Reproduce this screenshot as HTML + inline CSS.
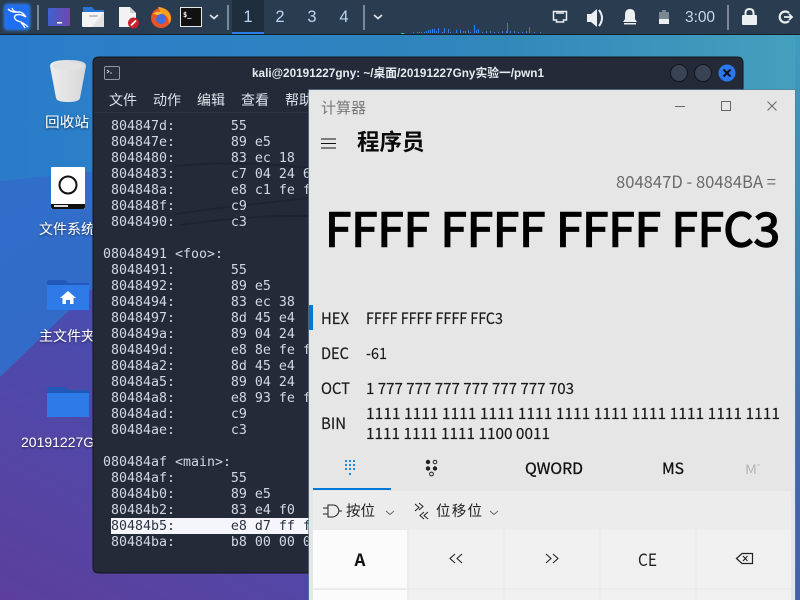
<!DOCTYPE html>
<html><head><meta charset="utf-8"><style>
html,body{margin:0;padding:0;width:800px;height:600px;overflow:hidden;background:#3a68c8}
svg{position:absolute;left:0;top:0}
text{font-family:"Liberation Sans","Noto Sans CJK SC",sans-serif}
.c text,text.c{font-family:"Noto Sans CJK SC","Liberation Sans",sans-serif}
.d{font-size:14px;fill:#fff;filter:url(#sh)}
pre{position:absolute;margin:0;font:13.29px/16px "DejaVu Sans Mono","Liberation Mono",monospace;color:#cfd8e3}
</style></head><body>
<svg width="800" height="600" viewBox="0 0 800 600">
<defs>
<linearGradient id="bg" x1="0" y1="0" x2="1" y2="0"><stop offset="0" stop-color="#2a7cca"/><stop offset=".6" stop-color="#2f87bb"/><stop offset="1" stop-color="#45a0bd"/></linearGradient>
<linearGradient id="bg2" x1="0" y1="0" x2="1" y2="1"><stop offset="0" stop-color="#2f6fcb"/><stop offset="1" stop-color="#3f5fc0"/></linearGradient>
<linearGradient id="bg3" x1="0" y1="1" x2="1" y2="0"><stop offset="0" stop-color="#5c3f9c"/><stop offset=".5" stop-color="#4650b4"/><stop offset="1" stop-color="#3f62b4"/></linearGradient>
<linearGradient id="rs" x1="0" y1="0" x2="0" y2="1"><stop offset="0" stop-color="#3f9cbc"/><stop offset=".4" stop-color="#3f84b4"/><stop offset=".7" stop-color="#4468ae"/><stop offset="1" stop-color="#4260ac"/></linearGradient>
<linearGradient id="tm" x1="0" y1="0" x2="1" y2="0"><stop offset="0" stop-color="#3f62d0"/><stop offset="1" stop-color="#6f48ac"/></linearGradient>
<filter id="sh" x="-20%" y="-30%" width="140%" height="170%"><feDropShadow dx="0" dy="1" stdDeviation="1.2" flood-color="#000" flood-opacity=".6"/></filter>
<filter id="gl" x="-30%" y="-30%" width="160%" height="160%"><feGaussianBlur stdDeviation="1.6"/></filter>
<linearGradient id="bin" x1="0" y1="0" x2="1" y2="0"><stop offset="0" stop-color="#ececec"/><stop offset="1" stop-color="#d8d8d8"/></linearGradient>
</defs>
<rect width="800" height="600" fill="url(#bg)"/>
<polygon points="0,181 300,150 800,120 800,600 0,600" fill="url(#bg2)"/>
<polygon points="0,377 90,290 400,180 800,260 800,600 0,600" fill="url(#bg3)"/>
<rect x="795" y="35" width="5" height="565" fill="url(#rs)"/>

<!-- desktop icons -->
<path d="M50 66 Q50 60 68 60 Q86 60 86 66 L80 98 Q79 102 68 102 Q57 102 56 98Z" fill="url(#bin)"/>
<ellipse cx="68" cy="66" rx="15.500" ry="4" fill="#e2e2e2"/>
<text class="d" x="45" y="127" textLength="44" lengthAdjust="spacingAndGlyphs">回收站</text>
<rect x="51" y="167" width="34" height="42" rx="1" fill="#fff"/>
<path d="M51 204h34v3q0 2-2 2H53q-2 0-2-2z" fill="#111"/>
<rect x="54" y="205" width="14" height="2" fill="#ddd"/>
<circle cx="68" cy="185" r="8.500" fill="none" stroke="#111" stroke-width="2"/>
<text class="d" x="39" y="234">文件系统</text>
<path d="M47 282q0-2 2-2h16l3 3h21v4H47z" fill="#2259b8"/>
<rect x="47" y="285" width="42" height="25" fill="#2e7ae6"/>
<path d="M68 291l8 7h-2.500v6h-3.500v-4h-4v4h-3.500v-6h-2.500z" fill="#fff"/>
<text class="d" x="39" y="341">主文件夹</text>
<path d="M47 389q0-2 2-2h16l3 3h21v4H47z" fill="#2259b8"/>
<rect x="47" y="393" width="42" height="24" fill="#2e7ae6"/>
<text class="d" x="21" y="447">20191227G…</text>

<!-- panel -->
<rect width="800" height="34" fill="#2a3c4f"/>
<rect y="34" width="800" height="1" fill="#16202a"/>
<rect x="232" width="32" height="34" fill="#1f2e3d"/>
<rect x="232" y="32" width="32" height="2" fill="#2a7ee6"/>
<rect x="4" y="4" width="26" height="26" rx="3" fill="#2a86ff" filter="url(#gl)"/>
<rect x="5" y="5" width="24" height="24" rx="2" fill="#1f6ff0"/>
<path d="M8 9C12 13 16 12 19 12C22 12 24 14 26 17C23 15 19 14 16 15C13 17 15 20 18 21C22 22 25 24 28 27M12 8C13 11 15 12 17 12M21 23C23 24 24 26 25 28" fill="none" stroke="#fff" stroke-width="1.400"/>
<rect x="37" y="5" width="2" height="25" fill="#7a8896"/>
<rect x="227" y="5" width="2" height="25" fill="#7a8896"/>
<rect x="363" y="5" width="2" height="25" fill="#7a8896"/>
<rect x="727" y="5" width="2" height="25" fill="#7a8896"/>
<rect x="48" y="8" width="22" height="18" rx="1" fill="url(#tm)"/>
<rect x="57" y="22" width="5" height="1.500" fill="#fff"/>
<path d="M83 7h9l3 3h9v4H83z" fill="#2a73d6"/>
<path d="M82 12h22v14q0 1-1 1H83q-1 0-1-1z" fill="#f4f4f4"/>
<path d="M104 12v15H92z" fill="#e2e2e2"/>
<rect x="89" y="15" width="9" height="2" rx="1" fill="#c2c2c2"/>
<path d="M119 7h11l6 6v14h-17z" fill="#f2f2f2"/>
<path d="M130 7l6 6h-6z" fill="#cfcfcf"/>
<circle cx="133.500" cy="23" r="5.500" fill="#c8202c"/>
<path d="M131 25.500l5-5" stroke="#fff" stroke-width="1.800"/>
<circle cx="161" cy="18" r="10" fill="#e8532a"/>
<path d="M158 7c6 0 13 5 13 11 0 3-1 5-2 6 0-7-4-10-8-11z" fill="#f8a11e"/>
<circle cx="161" cy="19" r="5" fill="#3f6fe0"/>
<path d="M153 14c3-3 7-3 10-1l-5 2z" fill="#fbc02d"/>
<rect x="180.500" y="7.500" width="21" height="19" fill="#111" stroke="#e8e8e8"/>
<text x="183" y="17" font-size="7" fill="#fff" style='font-family:"DejaVu Sans Mono",monospace' font-weight="bold">$_</text>
<path d="M210 15l4 3.500 4-3.500" fill="none" stroke="#dfe5ea" stroke-width="1.600"/>
<path d="M374 15l4 3.500 4-3.500" fill="none" stroke="#dfe5ea" stroke-width="1.600"/>
<g font-size="16.500" fill="#b9d6ee" text-anchor="middle"><text x="248" y="22">1</text><text x="280" y="22">2</text><text x="312" y="22">3</text><text x="344" y="22">4</text></g>
<path d="M401 33.500h3.500" stroke="#29c0a0" stroke-width="1"/>
<path transform="translate(.5,-1)" d="M413 34v-1M417 34v-1M419 34v-1M421 34v-1M424 34v-1M426 34v-2M428 34v-3M430 34v-3M432 34v-4M434 34v-4M436 34v-2M438 34v-5M442 34v-1M444 34v-5M448 34v-4M450 34v-1M456 34v-3M460 34v-3M463 34v-2M465 34v-2M468 34v-3M470 34v-1M474 34v-8M476 34v-3M478 34v-4M482 34v-1M486 34v-2M490 34v-2M494 34v-1M498 34v-1M502 34v-2M506 34v-2M507 34v-10M510 34v-2M514 34v-2M518 34v-1M522 34v-1M526 34v-2M529 34v-6M534 34v-1M540 34v-1" stroke="#2a80f0" stroke-width="1"/>
<path d="M553.500 11.500h13v8.500h-3v2h-7v-2h-3z" fill="none" stroke="#eceff2" stroke-width="1.500"/>
<path d="M556 11h8v3h-8z" fill="#eceff2" opacity=".75"/>
<path d="M587 14h4l6-5v18l-6-5h-4z" fill="#eceff2"/>
<path d="M599 10q6 8 0 16" fill="none" stroke="#eceff2" stroke-width="2"/>
<path d="M630 9q5 0 5 6v4l2 3h-14l2-3v-4q0-6 5-6z" fill="#eceff2"/><rect x="624" y="23" width="12" height="1.500" fill="#eceff2"/>
<rect x="659" y="12" width="10" height="12" fill="#7b8894"/><rect x="662" y="10" width="4" height="2" fill="#7b8894"/>
<rect x="659" y="19" width="10" height="5" fill="#eceff2"/>
<text x="685" y="22" font-size="15.500" fill="#c4d8e8" textLength="30">3:00</text>
<path d="M745.500 16v-3q0-4 4-4t4 4v3" fill="none" stroke="#eceff2" stroke-width="2"/><rect x="742" y="15" width="15" height="10" rx="1" fill="#eceff2"/>
<path d="M789 13a5.500 5.500 0 1 0 0 8" fill="none" stroke="#eceff2" stroke-width="2.200"/><path d="M784 17h8M789 14l3 3-3 3" fill="none" stroke="#eceff2" stroke-width="1.800"/>

<!-- terminal -->
<path d="M99 57H737q6 0 6 6V573H99q-6 0-6-6V63q0-6 6-6z" fill="#252a38" stroke="#11161d" stroke-width="1"/>
<path d="M175 166Q240 160 309 168M175 214Q240 205 309 198M180 225Q250 215 309 216" fill="none" stroke="#1f2330" stroke-width="2"/>
<rect x="104.500" y="66.500" width="15" height="13" rx="1.500" fill="#2a2f3b" stroke="#8f98a4"/>
<path d="M107 70l2 1.500-2 1.500M110 73h2" stroke="#dfe5ea" stroke-width=".8" fill="none"/>
<text x="252" y="77" font-size="12" fill="#e6ebf0" font-weight="bold" textLength="292" lengthAdjust="spacingAndGlyphs">kali@20191227gny: ~/桌面/20191227Gny实验一/pwn1</text>
<circle cx="679" cy="73" r="8.500" fill="#3a4354" stroke="#11161d"/>
<circle cx="703" cy="73" r="8.500" fill="#3a4354" stroke="#11161d"/>
<circle cx="727" cy="73" r="8.500" fill="#2a78ee"/>
<path d="M723.500 69.500l7 7m0-7l-7 7" stroke="#0c1420" stroke-width="2.200"/>
<g font-size="14" fill="#dce3ea"><text x="109" y="105">文件</text><text x="153" y="105">动作</text><text x="197" y="105">编辑</text><text x="241" y="105">查看</text><text x="285" y="105">帮助</text></g>
<rect x="94" y="112" width="215" height="1" fill="#2e3443"/>
<rect x="111" y="518" width="198" height="16" fill="#f4f6fb"/>
</svg>

<pre style="left:103px;top:119px"> 804847d:       55
 804847e:       89 e5
 8048480:       83 ec 18
 8048483:       c7 04 24 60
 804848a:       e8 c1 fe ff
 804848f:       c9
 8048490:       c3

08048491 &lt;foo&gt;:
 8048491:       55
 8048492:       89 e5
 8048494:       83 ec 38
 8048497:       8d 45 e4
 804849a:       89 04 24
 804849d:       e8 8e fe ff
 80484a2:       8d 45 e4
 80484a5:       89 04 24
 80484a8:       e8 93 fe ff
 80484ad:       c9
 80484ae:       c3

080484af &lt;main&gt;:
 80484af:       55
 80484b0:       89 e5
 80484b2:       83 e4 f0
<span style="color:#2b3140"> 80484b5:       e8 d7 ff ff</span>
 80484ba:       b8 00 00 00</pre>

<svg class="c" width="800" height="600" viewBox="0 0 800 600">
<!-- calculator -->
<rect x="309" y="90" width="486" height="510" fill="#e6e6e6"/>
<rect x="308.500" y="89.500" width="487" height="511" fill="none" stroke="#5a7f94" stroke-width="1" opacity=".7"/>
<text x="321" y="113" font-size="15" fill="#7a7a7a">计算器</text>
<path d="M675 106.500h10" stroke="#666"/>
<rect x="721.500" y="101.500" width="9" height="9" fill="none" stroke="#666"/>
<path d="M767.500 101.500l9 9m0-9l-9 9" stroke="#666"/>
<path d="M321 139h15M321 143.500h15M321 148h15" stroke="#111" stroke-width="1.100"/>
<text x="357" y="150" font-size="22.500" font-weight="bold" fill="#0a0a0a">程序员</text>
<text x="616" y="188" font-size="17" fill="#6a6a6a" textLength="160" lengthAdjust="spacingAndGlyphs">804847D - 80484BA =</text>
<text x="325" y="246.500" font-size="46.500" fill="#000" stroke="#000" stroke-width="1.500" textLength="455" lengthAdjust="spacingAndGlyphs">FFFF FFFF FFFF FFC3</text>
<rect x="309" y="305" width="4" height="25" fill="#0078d7"/>
<g font-size="15.500" fill="#1a1a1a" stroke="#1a1a1a" stroke-width=".15">
<text x="321" y="324" textLength="28" lengthAdjust="spacingAndGlyphs">HEX</text>
<text x="366" y="324" textLength="137" lengthAdjust="spacingAndGlyphs">FFFF FFFF FFFF FFC3</text>
<text x="321" y="359" textLength="28" lengthAdjust="spacingAndGlyphs">DEC</text>
<text x="366" y="359" textLength="21" lengthAdjust="spacingAndGlyphs">-61</text>
<text x="321" y="394" textLength="29" lengthAdjust="spacingAndGlyphs">OCT</text>
<text x="366" y="394" textLength="208" lengthAdjust="spacingAndGlyphs">1 777 777 777 777 777 777 703</text>
<text x="321" y="429" textLength="25" lengthAdjust="spacingAndGlyphs">BIN</text>
<text x="366" y="419" textLength="414" lengthAdjust="spacingAndGlyphs">1111 1111 1111 1111 1111 1111 1111 1111 1111 1111 1111</text>
<text x="366" y="439" textLength="184" lengthAdjust="spacingAndGlyphs">1111 1111 1111 1100 0011</text>
</g>
<g fill="#1e88e5"><rect x="345" y="460" width="2" height="2"/><rect x="349" y="460" width="2" height="2"/><rect x="353" y="460" width="2" height="2"/><rect x="345" y="464" width="2" height="2"/><rect x="349" y="464" width="2" height="2"/><rect x="353" y="464" width="2" height="2"/><rect x="345" y="468" width="2" height="2"/><rect x="349" y="468" width="2" height="2"/><rect x="353" y="468" width="2" height="2"/><rect x="349" y="473" width="2" height="2"/></g>
<circle cx="428" cy="462" r="2.200" fill="#222"/><circle cx="435" cy="462" r="1.800" fill="none" stroke="#222"/><circle cx="428" cy="468.500" r="2.200" fill="#222"/><circle cx="435" cy="468.500" r="2.200" fill="#222"/><circle cx="431.500" cy="474" r="1.900" fill="none" stroke="#222"/>
<text x="525" y="474" font-size="15.500" fill="#111" stroke="#111" stroke-width=".3" textLength="58" lengthAdjust="spacingAndGlyphs">QWORD</text>
<text x="662" y="474" font-size="15.500" fill="#111" stroke="#111" stroke-width=".3" textLength="22" lengthAdjust="spacingAndGlyphs">MS</text>
<text x="745" y="474" font-size="13" fill="#b5b5b5" textLength="12" lengthAdjust="spacingAndGlyphs">M</text>
<path d="M757 464.500h3l-1.500 1.500z" fill="#b5b5b5"/>
<rect x="313" y="488" width="78" height="2" fill="#0078d7"/>
<rect x="313" y="491" width="478" height="109" fill="#ececec"/>
<path d="M323 508h5M323 514h5M328 505h5q5 0 6 6-1 5-6 6h-5zM339 511h3" fill="none" stroke="#222" stroke-width="1"/>
<text x="346" y="516" font-size="14.500" fill="#222">按位</text>
<path d="M386 511l4 3.500 4-3.500" fill="none" stroke="#666"/>
<path d="M415 504l4 3.500-4 3.500M419 503l4 3.500-4 3.500M424 512l-4 3.500 4 3.500M428 512l-4 3.500 4 3.500" fill="none" stroke="#222"/>
<text x="436" y="516" font-size="14.500" fill="#222" textLength="46">位移位</text>
<path d="M490 511l4 3.500 4-3.500" fill="none" stroke="#666"/>
<rect x="313" y="530" width="94" height="58" fill="#fbfbfb"/>
<g fill="#f0f0f0"><rect x="409" y="530" width="94" height="58"/><rect x="505" y="530" width="94" height="58"/><rect x="601" y="530" width="94" height="58"/><rect x="697" y="530" width="94" height="58"/></g>
<rect x="313" y="590" width="94" height="10" fill="#fbfbfb"/>
<g fill="#f0f0f0"><rect x="409" y="590" width="94" height="10"/><rect x="505" y="590" width="94" height="10"/><rect x="601" y="590" width="94" height="10"/><rect x="697" y="590" width="94" height="10"/></g>
<text x="354.500" y="566" font-size="17" font-weight="bold" fill="#111">A</text>
<path d="M455 554l-5 4.500 5 4.500M462 554l-5 4.500 5 4.500M546 554l5 4.500-5 4.500M553 554l5 4.500-5 4.500" fill="none" stroke="#222" stroke-width="1.100"/>
<text x="638" y="566" font-size="17" fill="#222" textLength="19" lengthAdjust="spacingAndGlyphs">CE</text>
<path d="M742 553.500h10.500v10H742l-5.500-5z" fill="none" stroke="#222" stroke-width="1.200"/>
<path d="M743 556l4.500 5m0-5l-4.500 5" stroke="#222" stroke-width="1.100"/>
</svg>
</body></html>
